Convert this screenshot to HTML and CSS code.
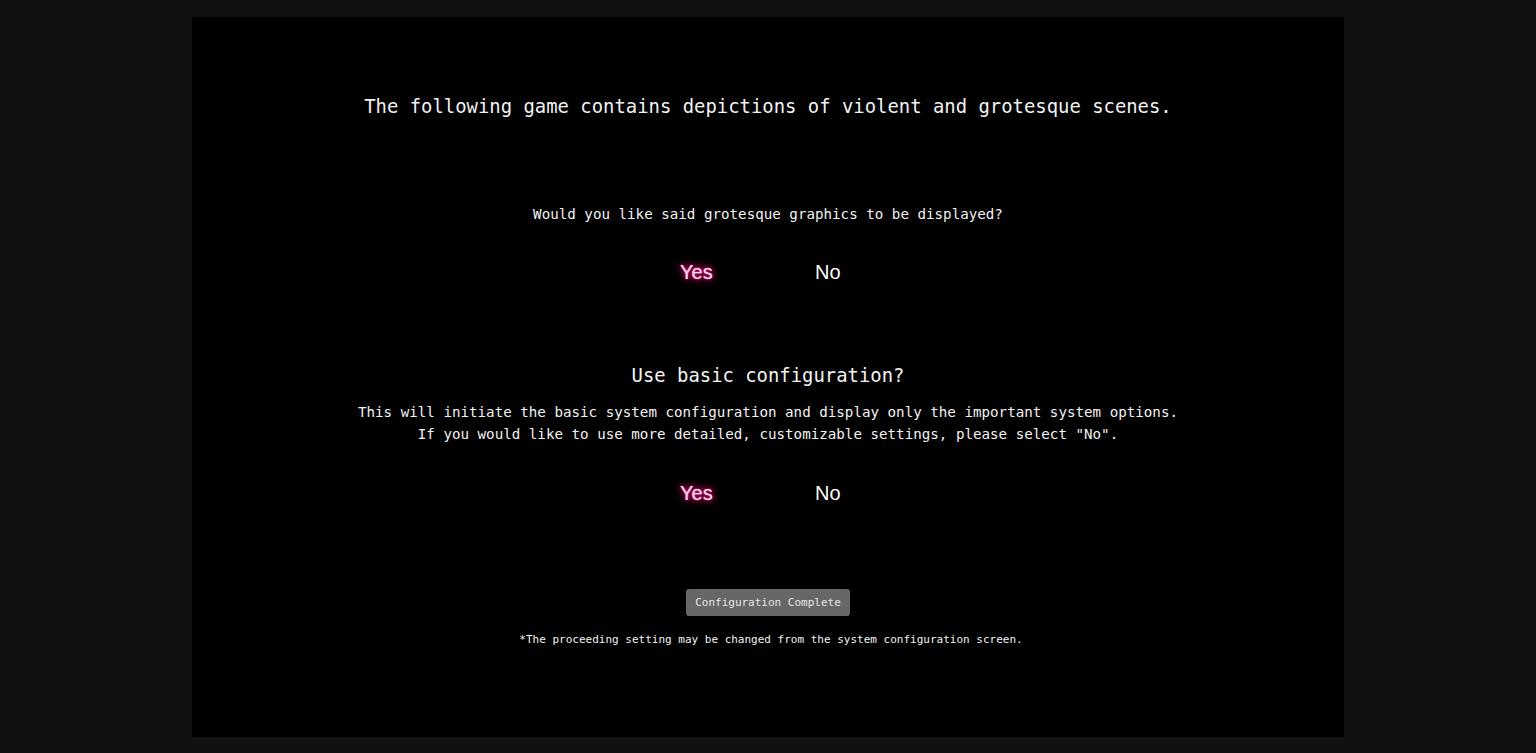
FILE: index.html
```html
<!DOCTYPE html>
<html>
<head>
    <meta charset="utf-8"/>
    <title>Configuration</title>
    <link rel="stylesheet" href="styles.css">
</head>
<body>
<div class="screen">
    <div class="config">
        <div class="warning">The following game contains depictions of violent and grotesque scenes.</div>

        <div class="question">Would you like said grotesque graphics to be displayed?</div>
        <div class="choices choices-gore">
            <span class="choice active">Yes</span>
            <span class="choice">No</span>
        </div>

        <div class="title">Use basic configuration?</div>
        <div class="desc">
            This will initiate the basic system configuration and display only the important system options.<br>
            If you would like to use more detailed, customizable settings, please select "No".
        </div>
        <div class="choices choices-basic">
            <span class="choice active">Yes</span>
            <span class="choice">No</span>
        </div>

        <button class="btn-complete">Configuration Complete</button>
        <div class="note">*The proceeding setting may be changed from the system configuration screen.</div>
    </div>
</div>
</body>
</html>
```

FILE: styles.css
```css
html,
body {
    height: 100%;
    margin: 0;
    padding: 0;
}

body {
    background: #111111;
    display: flex;
    justify-content: center;
    align-items: center;
    font-family: "DejaVu Sans Mono", "Liberation Mono", monospace;
    color: #f2f2f2;
}

.screen {
    width: 1152px;
    height: 720px;
    margin-top: 1px;
    background: #000;
}

.config {
    display: flex;
    flex-direction: column;
    align-items: center;
    text-align: center;
    padding-top: 77px;
}

.warning {
    font-size: 18.9px;
    line-height: 24px;
    white-space: nowrap;
}

.question {
    margin-top: 86px;
    font-size: 14.2px;
    line-height: 20px;
    white-space: nowrap;
}

.choices {
    display: flex;
    gap: 94px;
    margin-top: 36px;
    font-family: "Liberation Sans", Arial, sans-serif;
    font-size: 20px;
    line-height: 24px;
}

.choices .choice {
    width: 41px;
    text-align: left;
    color: #fff;
    cursor: pointer;
}

.choices .choice.active {
    color: #ffe4f0;
    text-shadow: 0 0 2px #ff2a96, 0 0 5px #d8006e, 0 0 9px #a8005a, 0 0 13px #780042;
}

.title {
    margin-top: 79px;
    font-size: 18.9px;
    line-height: 24px;
    white-space: nowrap;
}

.desc {
    margin-top: 14px;
    font-size: 14.2px;
    line-height: 22px;
    white-space: nowrap;
}

.choices-basic {
    margin-top: 36px;
}

.btn-complete {
    margin-top: 84px;
    width: 164px;
    height: 27px;
    padding: 0;
    border: none;
    border-radius: 3px;
    background: #676767;
    color: #e6e6e6;
    font-family: "DejaVu Sans Mono", "Liberation Mono", monospace;
    font-size: 11px;
    cursor: pointer;
}

.note {
    margin-top: 16px;
    font-size: 11px;
    line-height: 16px;
    white-space: nowrap;
    padding-left: 6px;
}
```
